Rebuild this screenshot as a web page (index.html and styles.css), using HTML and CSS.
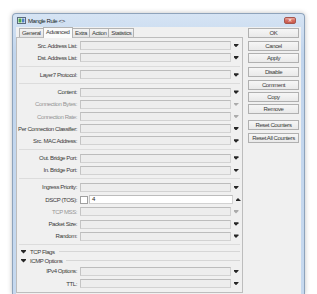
FILE: index.html
```html
<!DOCTYPE html>
<html lang="en">
<head>
  <meta charset="UTF-8">
  <title>Mangle Rule</title>
  <link rel="stylesheet" href="styles.css">
</head>
<body>
  <div class="window">
    <div class="titlebar">
      <svg class="app-icon" width="9" height="7" viewBox="0 0 9 7">
        <rect x="0.5" y="0.5" width="8" height="6" fill="#fff" stroke="#5a6b7e"/>
        <rect x="1.5" y="1.5" width="3" height="4" fill="#4da64d"/>
        <rect x="5" y="1.5" width="2.5" height="4" fill="#4f7fc5"/>
      </svg>
      <span class="title">Mangle Rule &lt;&gt;</span>
      <span class="close">✕</span>
    </div>
    <div class="client">
      <div class="main">
        <div class="tabs">
          <span class="tab">General</span>
          <span class="tab active">Advanced</span>
          <span class="tab">Extra</span>
          <span class="tab">Action</span>
          <span class="tab">Statistics</span>
        </div>
        <div class="pane">
          <div class="row"><label>Src. Address List:</label><span class="field"></span><span class="drop"></span></div>
          <div class="row"><label>Dst. Address List:</label><span class="field"></span><span class="drop"></span></div>
          <div class="sep"></div>
          <div class="row"><label>Layer7 Protocol:</label><span class="field"></span><span class="drop"></span></div>
          <div class="sep"></div>
          <div class="row"><label>Content:</label><span class="field"></span><span class="drop"></span></div>
          <div class="row off"><label>Connection Bytes:</label><span class="field"></span><span class="drop"></span></div>
          <div class="row off"><label>Connection Rate:</label><span class="field"></span><span class="drop"></span></div>
          <div class="row"><label>Per Connection Classifier:</label><span class="field"></span><span class="drop"></span></div>
          <div class="row"><label>Src. MAC Address:</label><span class="field"></span><span class="drop"></span></div>
          <div class="sep"></div>
          <div class="row"><label>Out. Bridge Port:</label><span class="field"></span><span class="drop"></span></div>
          <div class="row"><label>In. Bridge Port:</label><span class="field"></span><span class="drop"></span></div>
          <div class="sep"></div>
          <div class="row"><label>Ingress Priority:</label><span class="field"></span><span class="drop"></span></div>
          <div class="row"><label>DSCP (TOS):</label><span class="check"></span><span class="field value">4</span><span class="drop up"></span></div>
          <div class="row off"><label>TCP MSS:</label><span class="field"></span><span class="drop"></span></div>
          <div class="row"><label>Packet Size:</label><span class="field"></span><span class="drop"></span></div>
          <div class="row"><label>Random:</label><span class="field"></span><span class="drop"></span></div>
          <div class="sep"></div>
          <div class="group-head"><span class="drop"></span><span>TCP Flags</span></div>
          <div class="group-head"><span class="drop"></span><span>ICMP Options</span></div>
          <div class="row"><label>IPv4 Options:</label><span class="field"></span><span class="drop"></span></div>
          <div class="row"><label>TTL:</label><span class="field"></span><span class="drop"></span></div>
        </div>
      </div>
      <div class="side">
        <div class="btn-group">
          <span class="btn">OK</span>
          <span class="btn">Cancel</span>
          <span class="btn">Apply</span>
        </div>
        <div class="btn-group">
          <span class="btn">Disable</span>
          <span class="btn">Comment</span>
          <span class="btn">Copy</span>
          <span class="btn">Remove</span>
        </div>
        <div class="btn-group">
          <span class="btn">Reset Counters</span>
          <span class="btn">Reset All Counters</span>
        </div>
      </div>
    </div>
  </div>
</body>
</html>
```

FILE: styles.css
```css
body {
  margin: 0;
  background: #ffffff;
  font-family: "Liberation Sans", Arial, sans-serif;
  font-size: 6px;
  letter-spacing: -0.4px;
  color: #3a3a3a;
  overflow: hidden;
}

.window {
  margin: 13px 0 0 12px;
  width: 293px;
  height: 281px;
  box-sizing: border-box;
  padding: 0 3px;
  background: linear-gradient(#d6e4f4, #c1d5ed 40px, #c6d9ef);
  border: 1px solid #8ea3bb;
  border-bottom: none;
  border-radius: 4px 4px 0 0;
  box-shadow: 0 0 5px rgba(0, 0, 0, 0.25);
  display: flex;
  flex-direction: column;
  overflow: hidden;
}

.titlebar {
  height: 13px;
  display: flex;
  align-items: center;
  flex-shrink: 0;
}

.app-icon {
  margin-left: 1px;
  margin-right: 2px;
}

.title {
  color: #1e1e1e;
}

.close {
  margin-left: auto;
  margin-right: 5px;
  width: 12px;
  height: 7px;
  box-sizing: border-box;
  border: 1px solid #a5564f;
  border-radius: 2px;
  background: linear-gradient(#eba99f, #d4695c 55%, #c85a4a);
  color: #fff;
  font-size: 5px;
  letter-spacing: 0;
  line-height: 5px;
  text-align: center;
}

.client {
  flex: 1;
  background: #f0f0f0;
  display: flex;
  align-items: flex-start;
}

.main {
  width: 227px;
  display: flex;
  flex-direction: column;
}

.tabs {
  height: 10px;
  display: flex;
  align-items: flex-end;
  padding-left: 3px;
}

.tab {
  height: 9px;
  box-sizing: border-box;
  line-height: 8px;
  padding: 0 2px;
  border: 1px solid #b3b3b3;
  border-bottom: none;
  margin-right: -1px;
  background: linear-gradient(#f4f4f4, #e4e4e4);
}

.tab.active {
  height: 11px;
  line-height: 9px;
  padding: 0 2.5px;
  background: #fbfbfb;
  position: relative;
  z-index: 1;
  top: 1px;
}

.pane {
  border: 1px solid #bdbdbd;
  background: #f0f0f0;
  padding: 1.5px 0 2px;
}

.row {
  height: 12.2px;
  display: flex;
  align-items: center;
}

.row label {
  width: 60px;
  margin-right: 3px;
  text-align: right;
  white-space: nowrap;
}

.row.off label {
  color: #959595;
}

.field {
  width: 151px;
  height: 9px;
  box-sizing: border-box;
  border: 1px solid #d2d2d2;
  border-top-color: #bcbcbc;
  border-left-color: #c4c4c4;
  background: #ededed;
}

.field.value {
  width: 144px;
  background: #ffffff;
  padding-left: 2px;
  line-height: 7px;
  color: #222;
}

.check {
  width: 6px;
  height: 6px;
  margin-right: 1px;
  border: 1px solid #a0a0a0;
  background: #fff;
}

.drop {
  width: 5px;
  height: 3.5px;
  margin-left: 2.5px;
  background: #262626;
  clip-path: polygon(0 0, 100% 0, 100% 28%, 50% 100%, 0 28%);
}

.row.off .drop {
  background: #ababab;
}

.drop.up {
  clip-path: polygon(50% 0, 100% 72%, 100% 100%, 0 100%, 0 72%);
}

.sep {
  height: 5px;
  display: flex;
  align-items: center;
  padding: 0 2px;
}

.sep::after {
  content: "";
  flex: 1;
  height: 1px;
  background: #dcdcdc;
}

.group-head {
  height: 9px;
  display: flex;
  align-items: center;
  gap: 4px;
  padding: 0 2px 0 4px;
}

.group-head .drop {
  margin-left: 0;
}

.group-head::after {
  content: "";
  flex: 1;
  height: 1px;
  background: #d6d6d6;
}

.side {
  width: 51px;
  margin-left: 5px;
  padding-top: 1.3px;
  display: flex;
  flex-direction: column;
  gap: 4.6px;
}

.btn-group {
  display: flex;
  flex-direction: column;
  gap: 2.3px;
}

.btn-group + .btn-group + .btn-group {
  margin-top: 1.4px;
}

.btn {
  height: 10px;
  box-sizing: border-box;
  border: 1px solid #b0b0b0;
  background: linear-gradient(#f6f6f6, #e9e9e9);
  text-align: center;
  line-height: 8px;
  white-space: nowrap;
}
```
